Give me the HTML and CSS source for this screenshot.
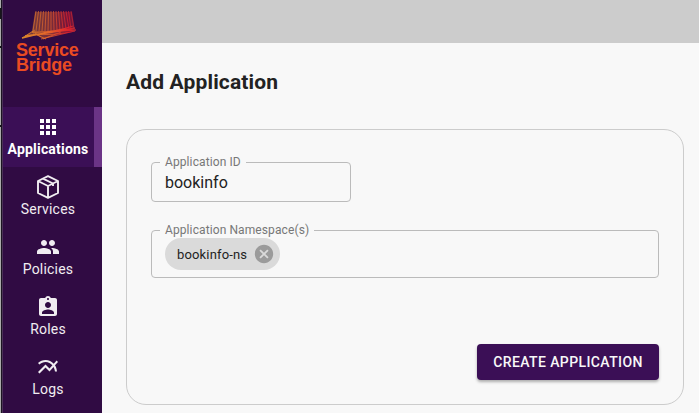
FILE: index.html
```html
<!DOCTYPE html>
<html lang="en">
<head>
<meta charset="utf-8">
<title>Service Bridge</title>
<link rel="stylesheet" href="styles.css">
</head>
<body>
<div class="app">
  <div class="edge"></div>
  <aside class="sidebar">
    <div class="brand">
      <svg class="brand-mark" width="56" height="30" viewBox="0 0 56 30" fill="none">
        <defs>
          <linearGradient id="flame" x1="0" y1="0" x2="56" y2="0" gradientUnits="userSpaceOnUse">
            <stop offset="0" stop-color="#d9892b"/>
            <stop offset=".5" stop-color="#e5622a"/>
            <stop offset=".85" stop-color="#e0202c"/>
            <stop offset="1" stop-color="#a82a38"/>
          </linearGradient>
        </defs>
        <path fill="url(#flame)" opacity=".4" d="M14 1H51L54 19 22 28 16 24 1 27 11 20Z"/>
        <g stroke="url(#flame)" stroke-width=".7">
          <path d="M15 0 12 20M17.5 0 15 20M20 0 18 20M22.500 0 21 20M25 0 24 20M27.500 0 27 20M30 0 30 20M32.500 0 33 19M35 0 36 19M37.500 0 39 19M40 0 42 18M42.500 0 45 18M45 0 48 18M47.500 0 50 18M50 0 53 18"/>
          <path stroke-width="1.3" d="M1 27Q28 20 55 19M4 25Q30 22 54 17M11 21Q32 22 52 15"/>
          <path stroke-width=".8" d="M12 23Q32 25 54 20M1 27 14 19M20 28 54 20M22 28 40 21M16 24 25 28M14 22 20 26"/>
        </g>
      </svg>
      <div class="brand-name"><div>Service</div><div>Bridge</div></div>
    </div>
    <nav class="nav">
      <a class="nav-item active">
        <svg class="icon" viewBox="0 0 24 24"><path d="M4 8h4V4H4v4zm6 12h4v-4h-4v4zm-6 0h4v-4H4v4zm0-6h4v-4H4v4zm6 0h4v-4h-4v4zm6-10v4h4V4h-4zm-6 4h4V4h-4v4zm6 6h4v-4h-4v4zm0 6h4v-4h-4v4z"/></svg>
        <span>Applications</span>
      </a>
      <a class="nav-item">
        <svg class="icon outline" viewBox="0 0 24 24"><path d="M12 1.200 22 6V18L12 22.800 2 18V6ZM2 6 12 11 22 6M12 11V22.800M7 3.600 17 8.500V11"/></svg>
        <span>Services</span>
      </a>
      <a class="nav-item">
        <svg class="icon" viewBox="0 0 24 24"><path d="M16 11c1.66 0 2.99-1.34 2.99-3S17.66 5 16 5c-1.66 0-3 1.34-3 3s1.34 3 3 3zm-8 0c1.66 0 2.99-1.34 2.99-3S9.66 5 8 5C6.34 5 5 6.34 5 8s1.34 3 3 3zm0 2c-2.33 0-7 1.17-7 3.5V19h14v-2.5c0-2.33-4.67-3.5-7-3.5zm8 0c-.29 0-.62.02-.97.05 1.16.84 1.97 1.97 1.97 3.45V19h6v-2.5c0-2.33-4.67-3.5-7-3.5z"/></svg>
        <span>Policies</span>
      </a>
      <a class="nav-item">
        <svg class="icon" viewBox="0 0 24 24"><path d="M19 3h-4.18C14.4 1.84 13.3 1 12 1c-1.3 0-2.4.84-2.82 2H5c-1.1 0-2 .9-2 2v14c0 1.1.9 2 2 2h14c1.1 0 2-.9 2-2V5c0-1.1-.9-2-2-2zm-7 0c.55 0 1 .45 1 1s-.45 1-1 1-1-.45-1-1 .45-1 1-1zm0 4c1.66 0 3 1.34 3 3s-1.34 3-3 3-3-1.34-3-3 1.34-3 3-3zm6 12H6v-1.4c0-2 4-3.1 6-3.1s6 1.1 6 3.1V19z"/></svg>
        <span>Roles</span>
      </a>
      <a class="nav-item">
        <svg class="icon" viewBox="0 0 24 24"><path d="M22 6.92l-1.41-1.41-2.85 3.21C15.68 6.4 12.83 5 9.61 5 6.72 5 4.07 6.16 2 8l1.42 1.42C5.12 7.93 7.27 7 9.61 7c2.74 0 5.09 1.26 6.77 3.24l-2.88 3.24-4-4L2 16.99l1.5 1.5 6-6.01 4 4 4.05-4.55c.75 1.35 1.25 2.9 1.44 4.55H21c-.22-2.3-.95-4.39-2.04-6.14L22 6.92z"/></svg>
        <span>Logs</span>
      </a>
    </nav>
  </aside>
  <div class="content">
    <header class="topbar"></header>
    <main class="page">
      <h1>Add Application</h1>
      <form class="card">
        <fieldset class="field field-id"><legend>Application ID</legend><span class="value">bookinfo</span></fieldset>
        <fieldset class="field field-ns">
          <legend>Application Namespace(s)</legend>
          <span class="chip">bookinfo-ns
            <svg viewBox="0 0 24 24"><path d="M12 2C6.47 2 2 6.47 2 12s4.47 10 10 10 10-4.47 10-10S17.53 2 12 2zm5 13.59L15.59 17 12 13.41 8.41 17 7 15.59 10.59 12 7 8.41 8.41 7 12 10.59 15.59 7 17 8.41 13.41 12 17 15.59z"/></svg>
          </span>
        </fieldset>
        <button class="submit" type="button">CREATE APPLICATION</button>
      </form>
    </main>
  </div>
</div>
</body>
</html>
```
FILE: styles.css
```css
* { box-sizing: border-box; }
body { margin: 0; overflow: hidden; background: #f8f8f8; font-family: Roboto, sans-serif; }
.app { display: flex; width: 699px; height: 413px; }
.edge {
  width: 3px;
  flex: none;
  background:
    linear-gradient(#17171a, #17171a) 0 8px / 1px 11px no-repeat,
    linear-gradient(#17171a, #17171a) 0 46px / 1px 2px no-repeat,
    linear-gradient(#17171a, #17171a) 0 125px / 1px 2px no-repeat,
    linear-gradient(90deg, #aaa 1px, #1b1422 1px, #1b1422 2px, #4a3158 2px);
}
.sidebar { width: 99px; flex: none; background: #300b43; }
.brand { height: 107px; padding: 11px 0 0 13px; }
.brand-mark { display: block; margin-left: 5px; }
.brand-name { margin-top: 2px; font: bold 18px/15px "Liberation Sans", sans-serif; letter-spacing: -.2px; color: #ea4b22; }
.nav-item { display: flex; flex-direction: column; align-items: center; height: 60px; padding: 8px 9px 0 0; color: #f0edf1; font-size: 14px; line-height: 20px; letter-spacing: .2px; }
.nav-item.active { color: #fff; font-weight: 700; background: #3b0f56; border-right: 8px solid #6b3486; padding-right: 1px; }
.icon { width: 24px; height: 24px; fill: currentColor; }
.icon.outline { fill: none; stroke: currentColor; stroke-width: 1.9; stroke-linejoin: round; }
.content { flex: 1; min-width: 0; }
.topbar { height: 43px; background: #ccc; }
.page { padding: 24px 15px 0 24px; }
h1 { margin: 0; font-size: 21px; line-height: 30px; font-weight: 700; color: #222; letter-spacing: .15px; }
.card { display: flex; flex-direction: column; height: 276px; margin-top: 32px; padding: 25px 24px 24px; border: 1px solid #ccc; border-radius: 20px; }
.field { display: block; min-width: 0; margin: 0; border: 1px solid #bbb; border-radius: 4px; padding: 0 13px; }
.field legend { height: 14px; margin-left: -5px; padding: 0 5px; font-size: 12px; line-height: 14px; letter-spacing: .1px; color: #777; }
.field-id { width: 200px; height: 47px; }
.value { display: block; padding-top: 2px; font-size: 16px; line-height: 24px; color: #222; letter-spacing: 0; }
.field-ns { height: 55px; margin-top: 21px; }
.chip { display: flex; align-items: center; width: 115px; height: 32px; margin-top: 1px; padding-left: 12px; border-radius: 16px; background: #dadada; color: #222; font-size: 13px; letter-spacing: .15px; white-space: nowrap; }
.chip svg { width: 22px; height: 22px; margin-left: 6px; fill: #9b9b9b; }
.submit { align-self: flex-end; margin-top: auto; width: 182px; height: 36px; padding: 0; border: 0; border-radius: 4px; background: #3b0f56; color: #f8f8f8; font: 500 14px/36px Roboto, sans-serif; letter-spacing: .4px; box-shadow: 0 2px 3px rgba(0,0,0,.3); }
```
